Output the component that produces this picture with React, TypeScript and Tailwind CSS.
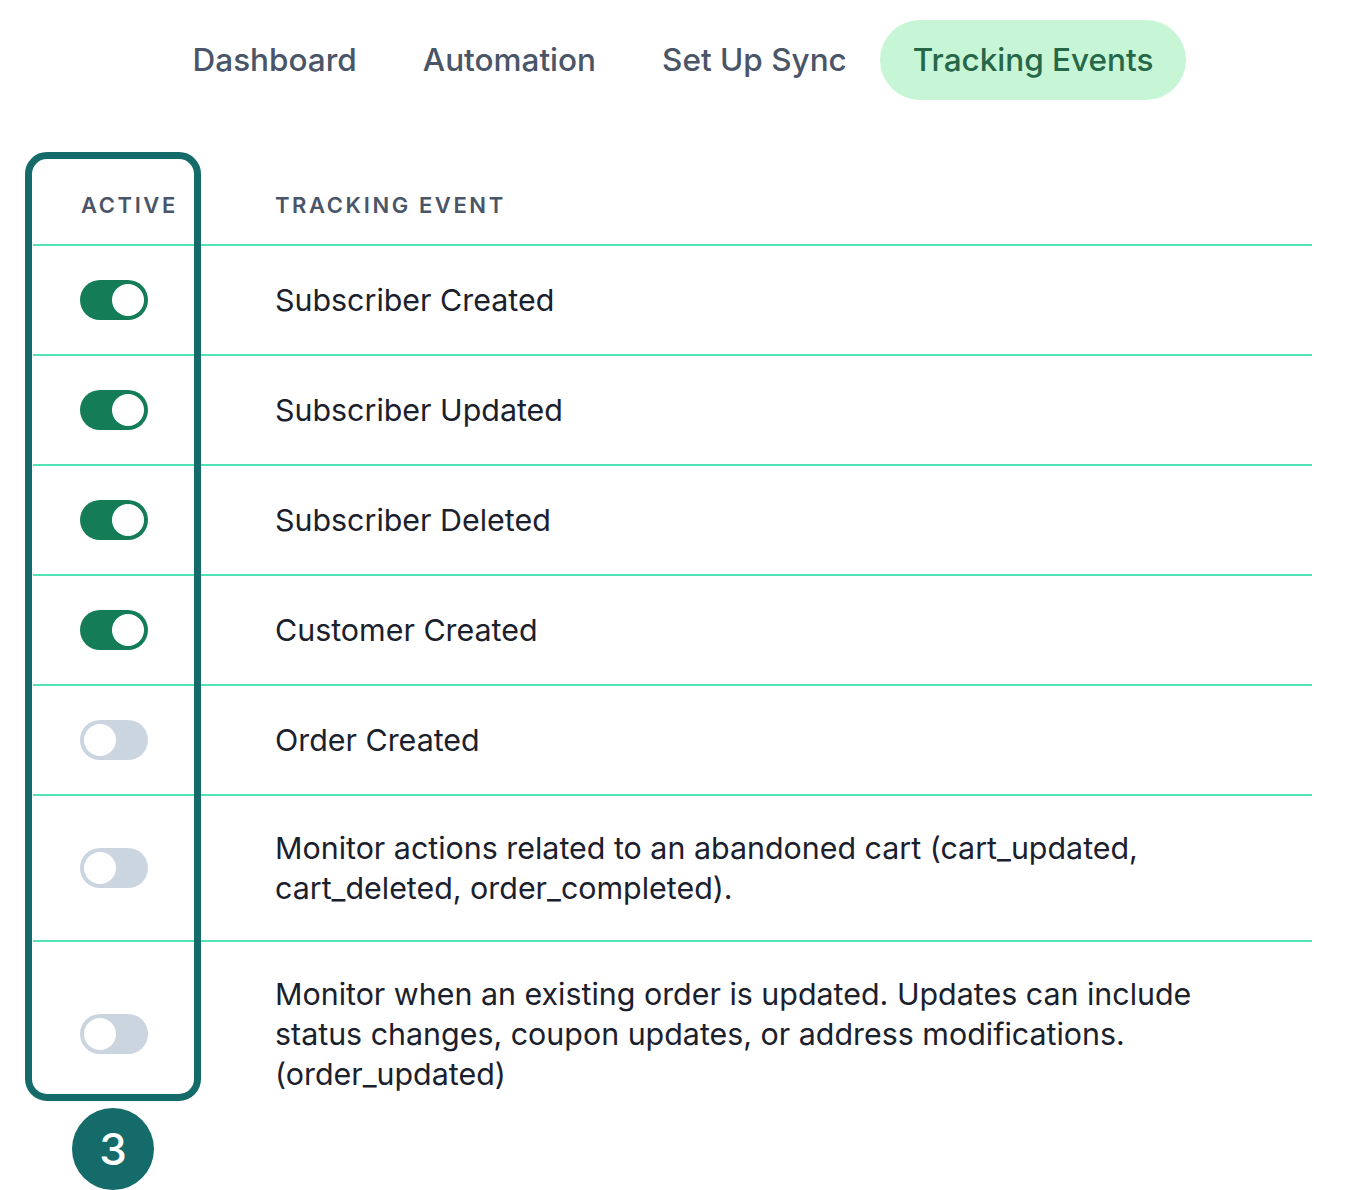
import React from 'react';

const tabs = ['Dashboard', 'Automation', 'Set Up Sync', 'Tracking Events'];

const events = [
  { on: true, label: 'Subscriber Created' },
  { on: true, label: 'Subscriber Updated' },
  { on: true, label: 'Subscriber Deleted' },
  { on: true, label: 'Customer Created' },
  { on: false, label: 'Order Created' },
  {
    on: false,
    long: true,
    label: 'Monitor actions related to an abandoned cart (cart_updated, cart_deleted, order_completed).',
  },
  {
    on: false,
    long: true,
    label:
      'Monitor when an existing order is updated. Updates can include status changes, coupon updates, or address modifications. (order_updated)',
  },
];

function Toggle({ on }: { on: boolean }) {
  return (
    <div
      className={`flex items-center w-[68px] h-[40px] rounded-full p-[4px] ${
        on ? 'bg-[#147d58] justify-end' : 'bg-[#cbd5e0] justify-start'
      }`}
    >
      <div className="w-[32px] h-[32px] rounded-full bg-white" />
    </div>
  );
}

export default function App() {
  return (
    <div className="bg-white min-h-[1190px] font-['Inter','Liberation_Sans',sans-serif]">
      {/* Tabs */}
      <nav className="flex justify-center pt-[20px]">
        {tabs.map((t) => {
          const active = t === 'Tracking Events';
          return (
            <div
              key={t}
              className={`h-[80px] px-[33px] flex items-center rounded-full text-[31.5px] font-medium ${
                active ? 'bg-[#c6f6d5] text-[#276749]' : 'text-[#4a5568]'
              }`}
            >
              {t}
            </div>
          );
        })}
      </nav>

      {/* Table */}
      <div className="relative mt-[52px] ml-[33px] w-[1279px]">
        <div className="flex items-end h-[94px] border-b-2 border-[#4fe3b6] pb-[22px]">
          <div className="w-[242px] pl-[48px] text-[22px] font-semibold tracking-[2.6px] text-[#4a5568]">
            ACTIVE
          </div>
          <div className="text-[22px] font-semibold tracking-[2.6px] text-[#4a5568]">TRACKING EVENT</div>
        </div>

        {events.map((e, i) => (
          <div
            key={i}
            className={`flex items-center ${e.long ? 'py-[32px]' : 'py-[34px]'} ${
              i < events.length - 1 ? 'border-b-2 border-[#4fe3b6]' : ''
            }`}
          >
            <div className="w-[242px] pl-[47px] shrink-0">
              <Toggle on={e.on} />
            </div>
            <div className="pr-[48px] text-[30.4px] leading-[40px] text-[#1a202c]">{e.label}</div>
          </div>
        ))}

        {/* highlight box */}
        <div className="absolute left-[-8px] top-0 w-[176px] h-[949px] border-[7px] border-[#156b69] rounded-[22px]" />
        <div className="absolute left-[39px] top-[956px] w-[82px] h-[82px] rounded-full bg-[#156b69] flex items-center justify-center text-white text-[44px] font-medium">
          3
        </div>
      </div>
    </div>
  );
}
